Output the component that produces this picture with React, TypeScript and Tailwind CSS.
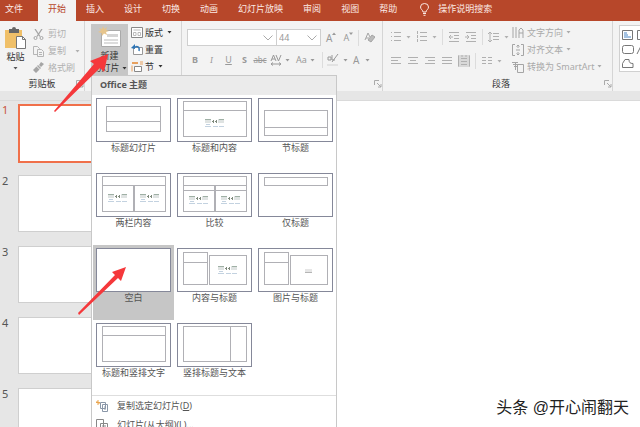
import { useState } from "react";
import type { ReactNode } from "react";

const TABS = ["文件", "开始", "插入", "设计", "切换", "动画", "幻灯片放映", "审阅", "视图", "帮助"];

type Box = [number, number, number, number];

interface Layout {
  name: string;
  boxes: Box[];
  content?: [number, number][];
  picture?: [number, number];
}

// placeholder boxes are x, y, width, height inside a 75x44 thumbnail
const LAYOUTS: Layout[] = [
  { name: "标题幻灯片", boxes: [[10, 8, 54, 15], [10, 23, 54, 10]] },
  { name: "标题和内容", boxes: [[6, 3, 63, 9], [6, 12, 63, 26]], content: [[28, 20]] },
  { name: "节标题", boxes: [[6, 12, 63, 17], [6, 29, 63, 8]] },
  { name: "两栏内容", boxes: [[6, 3, 63, 9], [6, 12, 31, 26], [38, 12, 31, 26]], content: [[12, 20], [44, 20]] },
  { name: "比较", boxes: [[6, 3, 63, 9], [6, 12, 31, 5], [38, 12, 31, 5], [6, 17, 31, 21], [38, 17, 31, 21]], content: [[12, 22], [44, 22]] },
  { name: "仅标题", boxes: [[6, 4, 63, 8]] },
  { name: "空白", boxes: [] },
  { name: "内容与标题", boxes: [[6, 4, 24, 10], [6, 14, 24, 22], [32, 7, 37, 29]], content: [[41, 17]] },
  { name: "图片与标题", boxes: [[6, 4, 24, 10], [6, 14, 24, 22], [32, 7, 37, 29]], picture: [47, 20] },
  { name: "标题和竖排文字", boxes: [[6, 3, 63, 9], [6, 12, 63, 26]] },
  { name: "竖排标题与文本", boxes: [[6, 3, 47, 35], [53, 3, 16, 35]] },
];

export default function App() {
  const [tab, setTab] = useState("开始");
  const [layout, setLayout] = useState("空白");

  return (
    <div className="relative flex h-screen flex-col overflow-hidden bg-white font-['Noto_Sans','Noto_Sans_CJK_SC',sans-serif] text-[9px] leading-3 text-[#555]">
      <nav className="flex h-[21px] shrink-0 items-stretch bg-[#b7472a] text-[#fbe9e4]">
        {TABS.map((t) => (
          <button
            key={t}
            onClick={() => setTab(t)}
            className={`shrink-0 px-[10px] pb-[3px] first:pr-[15px] first:pl-[5px] ${t === tab ? "bg-[#f3f3f3] text-[#b7472a]" : ""}`}
          >
            {t}
          </button>
        ))}
        <button className="ml-3 flex items-center gap-2 pb-[3px]">
          <Bulb />
          操作说明搜索
        </button>
      </nav>

      <div className="relative flex h-[70px] shrink-0 bg-[#f3f3f3]">
        <ClipboardGroup />
        <SlidesGroup />
        <FontGroup />
        <ParagraphGroup />
        <ShapesGroup />
        <NewSlideMenu layout={layout} onPick={setLayout} />
      </div>

      <div className="h-[10px] shrink-0 border-b border-[#dadada] bg-[#e6e6e6]" />

      <main className="flex min-h-0 flex-1">
        <SlideList />
        <section className="flex flex-1 items-end justify-end bg-white pr-[11px] pb-[9px]">
          <p className="font-['Liberation_Sans','Noto_Sans_CJK_SC',sans-serif] text-[16px] leading-5 text-[#222]">头条 @开心闹翻天</p>
        </section>
      </main>

      <svg className="pointer-events-none absolute top-0 left-0 z-20 h-[330px] w-[140px]" viewBox="0 0 140 330" fill="#f5383b">
        <path d="M54 111L94 64l-4-3 18-7-4 18-4-4L55 112z" />
        <path d="M78 313l37-38-3-3 14-5-5 14-3-3L79 315z" />
      </svg>
    </div>
  );
}

function Bulb() {
  return (
    <svg viewBox="0 0 11 13" className="h-[13px] w-[11px]" fill="none" stroke="currentColor">
      <path d="M4 9c0-2-2.500-2.500-2.500-5a4 3.500 0 0 1 8 0C9.500 6.500 7 7 7 9zM4 10.500h3M4.500 12.300h2" />
    </svg>
  );
}

function Caret() {
  return (
    <svg viewBox="0 0 5 3" className="h-[3px] w-[5px] shrink-0" fill="currentColor">
      <path d="M.5 0h4l-2 2.500z" />
    </svg>
  );
}

function Launcher() {
  return (
    <button aria-label="更多选项" className="h-2 w-2 text-[#aaa]">
      <svg viewBox="0 0 8 8" className="h-2 w-2" fill="none" stroke="currentColor">
        <path d="M.5 5V.5H5M3 3l4 4M7 4v3H4" />
      </svg>
    </button>
  );
}

function GroupFooter({ children }: { children?: ReactNode }) {
  return (
    <div className="mt-auto grid h-[15px] grid-cols-[8px_1fr_8px] items-center text-center text-[#333]">
      <span />
      <span>{children}</span>
      <Launcher />
    </div>
  );
}

function Divider() {
  return <span className="h-4 w-px bg-[#dcdcdc]" />;
}

function ClipboardGroup() {
  return (
    <div className="flex w-[85px] shrink-0 flex-col border-r border-[#d5d5d5] pt-[5px]">
      <div className="flex h-[50px] gap-[6px] pl-[4px]">
        <button className="flex w-[23px] flex-col items-center">
          <svg viewBox="0 0 23 25" className="h-[25px] w-[23px]">
            <path d="M1 4h17v18H1z" fill="#f0c069" />
            <path d="M5 3h3a2 2 0 0 1 4 0h3v4H5z" fill="#666" />
            <path d="M12.500 10.500h6l3 3v9h-9z" fill="#fff" stroke="#777" />
            <path d="M18.500 10.500v3h3" fill="none" stroke="#777" />
          </svg>
          <span className="text-[#333]">粘贴</span>
          <span className="mt-1"><Caret /></span>
        </button>
        <div className="flex flex-col text-[#b0b0b0]">
          <button className="flex h-[17px] items-center gap-[4px]">
            <svg viewBox="0 0 11 11" className="h-[11px] w-[11px]" fill="none" stroke="#a5a5a5">
              <path d="M2 0l5 7.500M9 0L4 7.500" strokeWidth="1.300" />
              <circle cx="2.500" cy="9" r="1.500" />
              <circle cx="8.500" cy="9" r="1.500" />
            </svg>
            剪切
          </button>
          <button className="flex h-[17px] items-center gap-[4px]">
            <svg viewBox="0 0 11 11" className="h-[11px] w-[11px]" fill="#f3f3f3" stroke="#b5b5b5">
              <path d="M.5.5h4l2 2v6h-6z" />
              <path d="M4.500 3.500h4l2 2v5h-6zM6 6.500h3M6 8.500h3" />
            </svg>
            复制
            <span className="ml-[5px]"><Caret /></span>
          </button>
          <button className="flex h-[17px] items-center gap-[4px]">
            <svg viewBox="0 0 11 11" className="h-[11px] w-[11px]" fill="#a5a5a5">
              <path d="M8 0l3 2-3 3-2-2zM5 3l3 3-1 1-3-3zM3.500 4.500l3 3L3 11 0 8z" />
            </svg>
            格式刷
          </button>
        </div>
      </div>
      <GroupFooter>剪贴板</GroupFooter>
    </div>
  );
}

function SlidesGroup() {
  return (
    <div className="flex w-[97px] shrink-0 border-r border-[#d5d5d5] pt-[3px] pl-[6px] text-[#333]">
      <button className="flex h-[52px] w-[37px] flex-col items-center bg-[#c6c6c6] pt-[2px]">
        <svg viewBox="0 0 24 22" className="h-[22px] w-6 shrink-0">
          <path d="M3.500 4.500h19v16h-19z" fill="#fff" stroke="#aaa" />
          <path d="M9 8h11v3H9z" fill="#d5d5d5" />
          <path d="M6 14h14M6 17h14" stroke="#bbb" />
          <path d="M5 0l1.200 3L9 1 8 4l3 1-3 1 1 3-3-1.500L4 10 3.500 7 0 6l3-1.500L1 2l3 1z" fill="#e6c58d" />
        </svg>
        <span className="mt-[2px]">新建</span>
        <span className="flex items-center gap-[2px] whitespace-nowrap">
          幻灯片
          <Caret />
        </span>
      </button>
      <div className="flex flex-col pl-[3px]">
        <button className="flex h-[17px] items-center gap-[2px]">
          <svg viewBox="0 0 12 11" className="h-[11px] w-3" fill="#fff" stroke="#888">
            <path d="M.5.5h11v10H.5z" />
            <path d="M2.500 3h7M2.500 5.500H5v3H2.500zM7 5.500h2.500v3H7z" stroke="#bbb" />
          </svg>
          版式
          <span className="ml-[2px]"><Caret /></span>
        </button>
        <button className="flex h-[17px] items-center gap-[2px]">
          <svg viewBox="0 0 12 11" className="h-[11px] w-3" fill="none">
            <path d="M2.500 3.500h9v7h-9z" fill="#fff" stroke="#999" />
            <path d="M3 4c3-3 6-1 5 3" stroke="#2e75b5" strokeWidth="1.400" />
            <path d="M0 4l4-4v5z" fill="#2e75b5" />
          </svg>
          重置
        </button>
        <button className="flex h-[17px] items-center gap-[2px]">
          <svg viewBox="0 0 12 11" className="h-[11px] w-3" fill="none">
            <path d="M1 2h6" stroke="#e8a15f" strokeWidth="2" />
            <path d="M9 1h3M9 3h3" stroke="#e8a15f" />
            <path d="M3.500 5.500h7v5h-7z" fill="#fff" stroke="#888" />
            <path d="M1 4.500v6" stroke="#e8a15f" />
          </svg>
          节
          <span className="ml-[2px]"><Caret /></span>
        </button>
      </div>
    </div>
  );
}

function Combo({ label, value, className }: { label: string; value: string; className: string }) {
  return (
    <span className={`relative flex h-[17px] border border-[#cfcfcf] bg-white ${className}`}>
      <select aria-label={label} defaultValue={value} className="w-full appearance-none pl-[2px]">
        <option>{value}</option>
      </select>
      <svg viewBox="0 0 10 6" className="pointer-events-none absolute top-[5px] right-[3px] h-[6px] w-[10px]" fill="none" stroke="#aaa">
        <path d="M.5.5L5 5 9.500.5" />
      </svg>
    </span>
  );
}

function FontGroup() {
  return (
    <div className="flex w-[201px] shrink-0 flex-col border-r border-[#d5d5d5] pt-[8px] pl-[5px] text-[#999]">
      <div className="flex items-center">
        <Combo label="字体" value="" className="w-[90px]" />
        <Combo label="字号" value="44" className="-ml-px w-[45px]" />
        <button className="ml-[5px] flex text-[10px]">A<FontStep d="M0 3l2-2.500L4 3z" /></button>
        <button className="ml-[7px] flex text-[9px]">A<FontStep d="M0 .5h4L2 3z" /></button>
        <span className="mx-[5px] flex"><Divider /></span>
        <button aria-label="清除格式">
          <svg viewBox="0 0 11 11" className="h-[11px] w-[11px]" fill="none" stroke="#a5a5a5">
            <path d="M1 8l3-7 2 4M2 6h3" />
            <path d="M4 8l4-5 3 2-4 5z" fill="#bbb" />
          </svg>
        </button>
      </div>
      <div className="mt-[6px] flex h-4 items-center">
        <button className="w-[16px] font-bold">B</button>
        <button className="w-[17px] font-serif italic">I</button>
        <button className="w-[17px] underline">U</button>
        <button className="w-[15px] font-bold">S</button>
        <button className="w-[16px] text-[8px] line-through">abc</button>
        <button aria-label="字符间距" className="ml-[2px] flex w-[24px] items-center gap-[3px]">
          <svg viewBox="0 0 12 12" className="h-3 w-3" fill="none" stroke="currentColor">
            <path d="M1 7l2.500-6L6 7M2 5h3M6 1l2.500 6L11 1M1 10h10M3 8.500L1 10l2 1.500M9 8.500l2 1.500-2 1.500" />
          </svg>
          <Caret />
        </button>
        <button className="ml-[2px] flex w-[22px] items-center gap-[3px]">Aa<Caret /></button>
        <span className="mx-[4px] flex"><Divider /></span>
        <button aria-label="突出显示" className="flex w-[26px] items-center gap-[4px]">
          <svg viewBox="0 0 12 12" className="h-3 w-3" fill="none" stroke="currentColor">
            <path d="M1 3h3v3H1zM5 1v5h3M11 0L5 8" />
            <path d="M0 11h11" stroke="#e2e2e2" strokeWidth="2" />
          </svg>
          <Caret />
        </button>
        <button className="flex items-center gap-[6px] text-[10px]">A<Caret /></button>
      </div>
      <GroupFooter />
    </div>
  );
}

function FontStep({ d }: { d: string }) {
  return <svg viewBox="0 0 4 3" className="h-[3px] w-1" fill="currentColor"><path d={d} /></svg>;
}

function ParagraphIcon({ d, label, caret, active }: { d: string; label: string; caret?: boolean; active?: boolean }) {
  return (
    <button aria-label={label} className={`flex items-center gap-[4px] text-[#b0b0b0] ${active ? "bg-[#d9d9d9] text-[#999]" : ""}`}>
      <svg viewBox="0 0 12 12" className="h-3 w-3" fill="none" stroke="currentColor"><path d={d} /></svg>
      {caret && <Caret />}
    </button>
  );
}

function ParagraphGroup() {
  return (
    <div className="flex w-[230px] shrink-0 flex-col border-r border-[#d5d5d5] pt-[3px] pl-[7px]">
      <div className="flex text-[#aaa]">
        <div className="flex w-[122px] flex-col gap-[8px] pt-[5px]">
          <div className="flex h-4 items-center gap-[5px]">
            <ParagraphIcon label="项目符号" caret d="M4 1.500h7M4 5.500h7M4 9.500h7M1 1.500h1M1 5.500h1M1 9.500h1" />
            <ParagraphIcon label="编号" caret d="M4 1.500h7M4 5.500h7M4 9.500h7M1.500 0v3M1.500 4v3M1.500 8v3" />
            <Divider />
            <ParagraphIcon label="减少缩进" d="M1 1.500h10M6 4.500h5M6 7.500h5M1 10.500h10M5 6H1M3 4L1 6l2 2" />
            <ParagraphIcon label="增加缩进" d="M1 1.500h10M6 4.500h5M6 7.500h5M1 10.500h10M0 6h4M2 4l2 2-2 2" />
            <Divider />
            <ParagraphIcon label="行距" caret d="M5 2.500h6M5 5.500h6M5 8.500h6M2 1v10M0 3l2-2 2 2M0 9l2 2 2-2" />
          </div>
          <div className="flex h-4 items-center gap-[5px]">
            <ParagraphIcon label="左对齐" d="M1 2.500h10M1 5.500h7M1 8.500h10" />
            <ParagraphIcon label="居中" d="M1 2.500h10M3 5.500h6M1 8.500h10" />
            <ParagraphIcon label="右对齐" d="M1 2.500h10M4 5.500h7M1 8.500h10" />
            <ParagraphIcon label="两端对齐" d="M1 2.500h10M1 5.500h10M1 8.500h10" />
            <ParagraphIcon label="分散对齐" active d="M.5.5v11M11.500.5v11M3 3.500h6M3 6.500h6M3 9.500h6M4 0v2M8 0v2" />
            <Divider />
            <ParagraphIcon label="分栏" caret d="M1 2.500h4M7 2.500h4M1 5.500h4M7 5.500h4M1 8.500h4M7 8.500h4" />
          </div>
        </div>
        <div className="flex flex-col">
          <TextOption label="文字方向" d="M1 0v11M4 0v11M7 11V3l2-2 2 2v8M7 6h4" />
          <TextOption label="对齐文本" d="M3 .5H.5v11H3M9 .5h2.500v11H9M6 1v3M4.500 2.500L6 1l1.500 1.500M6 11V8M4.500 9.500L6 11l1.500-1.500M4 6h4" />
          <TextOption label="转换为 SmartArt" d="M0 1.500h6M1 3.500h5M2 5.500h3M5.500 3.500h6v8h-6zM3.500 2v7" />
        </div>
      </div>
      <GroupFooter>段落</GroupFooter>
    </div>
  );
}

function TextOption({ label, d }: { label: string; d: string }) {
  return (
    <button className="flex h-[17px] items-center gap-[3px] whitespace-nowrap">
      <svg viewBox="0 0 12 12" className="h-3 w-3" fill="none" stroke="#a5a5a5"><path d={d} /></svg>
      {label}
      <Caret />
    </button>
  );
}

function ShapesGroup() {
  return (
    <div className="flex-1 overflow-hidden pt-[4px] pl-[6px]">
      <div className="flex h-[47px] w-[60px] flex-col justify-around border border-[#d0d0d0] bg-white pl-[2px]">
        <svg viewBox="0 0 24 42" className="h-[42px] w-6" fill="none" stroke="#777">
          <path d="M.5 2.500h10v9H.5zM15.500 2.500h7v9h-7z" />
          <path d="M2 5h3M2 7h4M2 9h7" stroke="#4a86c5" />
          <rect x=".5" y="17.500" width="11" height="8" rx="2" />
          <path d="M15 26l4-8 4 8" />
          <path d="M3 31.500h4c0 3 1 4 4 4v4H.5v-4z" />
        </svg>
      </div>
    </div>
  );
}

function NewSlideMenu({ layout, onPick }: { layout: string; onPick: (name: string) => void }) {
  return (
    <div className="absolute top-[54px] left-[91px] z-10 w-[246px] border border-[#c8c8c8] bg-white">
      <h2 className="h-[19px] bg-[#ebebeb] pt-[3px] pl-[8px] text-[9px] leading-3 font-bold text-[#555]">Office 主题</h2>
      <div className="grid grid-cols-3 pl-px">
        {LAYOUTS.map((item) => (
          <button
            key={item.name}
            onClick={() => onPick(item.name)}
            className={`flex h-[75px] flex-col items-center pt-[3px] ${item.name === layout ? "bg-[#c6c6c6]" : ""}`}
          >
            <LayoutThumb item={item} />
            <span className="whitespace-nowrap">{item.name}</span>
          </button>
        ))}
      </div>
      <div className="flex flex-col border-t border-[#dedede]">
        <button className="flex h-[19px] items-center gap-[8px] pl-[4px]">
          <svg viewBox="0 0 13 12" className="h-3 w-[13px]" fill="#fff" stroke="#8a97a8">
            <path d="M4.500 2.500h5v6h-5zM6.500 4.500h5v7h-5zM8 7h2M8 9h2" />
            <path d="M2 0v5M0 2.500h4M.5 1l3 3" stroke="#eaa54f" />
          </svg>
          <span>复制选定幻灯片(<u>D</u>)</span>
        </button>
        <button className="flex h-[19px] items-center gap-[8px] pl-[4px]">
          <svg viewBox="0 0 13 12" className="h-3 w-[13px]" fill="#fff" stroke="#888">
            <path d="M.5.5h7v8h-7zM4.500 4.500h7v7h-7zM6 7h4M6 9h4" />
          </svg>
          <span>幻灯片(从大纲)(<u>L</u>)...</span>
        </button>
      </div>
    </div>
  );
}

function LayoutThumb({ item }: { item: Layout }) {
  return (
    <svg viewBox="0 0 75 44" className="h-11 w-[75px] shrink-0" fill="none" shapeRendering="crispEdges">
      <path d="M.5.5h74v43H.5z" fill="#fff" stroke="#858899" />
      {item.boxes.map(([x, y, w, h]) => (
        <rect key={`${x}-${y}`} x={x + 0.5} y={y + 0.5} width={w} height={h} stroke="#b0b0b5" />
      ))}
      {item.content?.map(([x, y]) => (
        <g key={x} transform={`translate(${x} ${y})`}>
          <path d="M0 1h6v4H0zM13 1h6v4h-6z" fill="#dfe3e2" />
          <path d="M0 1.500h6M14 1.500h5" stroke="#9fb0a5" />
          <path d="M7 3.500h2M10 3.500h2M8.500 2v3M11.500 2v3" stroke="#7f8a7c" />
          <path d="M0 8.500h6M8 8.500h5M14 8.500h5M1 6.500h4" stroke="#c3d2e0" />
        </g>
      ))}
      {item.picture && (
        <g transform={`translate(${item.picture[0]} ${item.picture[1]})`}>
          <path d="M0 1h7v4H0z" fill="#e6e6e6" />
          <path d="M0 4.500h7" stroke="#b5b5b5" />
        </g>
      )}
    </svg>
  );
}

function SlideList() {
  return (
    <ol className="flex w-[150px] shrink-0 flex-col gap-[15px] overflow-hidden bg-[#e6e6e6] pt-[3px]">
      {[1, 2, 3, 4, 5].map((n) => (
        <li key={n} className="flex h-14 shrink-0 items-start">
          <span className={`w-[18px] pl-[2px] text-[11px] leading-3 ${n === 1 ? "text-[#c8553a]" : "text-[#555]"}`}>{n}</span>
          <button
            aria-label={`幻灯片 ${n}`}
            className={`w-[110px] bg-white ${n === 1 ? "h-[59px] border-2 border-[#f0704a]" : "h-[57px] border border-[#cfcfcf]"}`}
          />
        </li>
      ))}
    </ol>
  );
}
